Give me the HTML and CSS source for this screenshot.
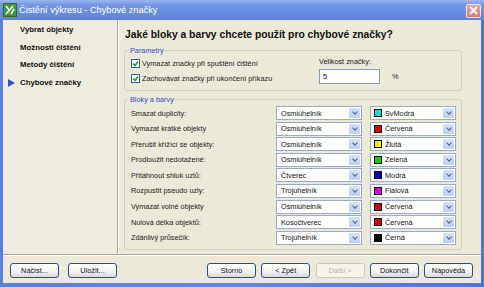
FILE: index.html
```html
<!DOCTYPE html>
<html lang="cs">
<head>
    <meta charset="UTF-8">
    <title>Čistění výkresu - Chybové značky</title>
    <link rel="stylesheet" href="styles.css">
</head>
<body>
    <div class="okno">
        <div class="titulek">
            <svg class="ikona" width="14" height="14" viewBox="0 0 14 14">
                <rect x="0.5" y="0.5" width="13" height="13" fill="#3f9a3a" stroke="#2b6e28"/>
                <path d="M3 11 L10 3 M3 3 L6 7 M8 11 L11 6" stroke="#fff" stroke-width="1.6" fill="none"/>
            </svg>
            <span class="titulek-text">Čistění výkresu - Chybové značky</span>
            <div class="zavrit">
                <svg width="9" height="9" viewBox="0 0 9 9"><path d="M1 1 L8 8 M8 1 L1 8" stroke="#fff" stroke-width="1.8"/></svg>
            </div>
        </div>

        <div class="ramec">
            <div class="obsah">
                <!-- kroky pruvodce -->
                <div class="navigace">
                    <div class="krok"><span class="znacka"></span>Vybrat objekty</div>
                    <div class="krok"><span class="znacka"></span>Možnosti čištění</div>
                    <div class="krok"><span class="znacka"></span>Metody čištění</div>
                    <div class="krok aktivni"><span class="znacka"></span>Chybové značky</div>
                </div>

                <div class="hlavni">
                    <h1>Jaké bloky a barvy chcete použít pro chybové značky?</h1>

                    <fieldset class="skupina parametry">
                        <legend>Parametry</legend>
                        <div class="zaskrtavani">
                            <div class="volba"><span class="check"></span>Vymazat značky při spuštění čištění</div>
                            <div class="volba"><span class="check"></span>Zachovávat značky při ukončení příkazu</div>
                        </div>
                        <div class="velikost">
                            <div class="velikost-popis">Velikost značky:</div>
                            <div class="velikost-radek">
                                <div class="pole">5</div>
                                <span class="procenta">%</span>
                            </div>
                        </div>
                    </fieldset>

                    <fieldset class="skupina bloky">
                        <legend>Bloky a barvy</legend>
                        <div class="mrizka">
                            <div class="popis">Smazat duplicity:</div>
                            <div class="combo"><span class="hodnota">Osmiúhelník</span><span class="sipka"></span></div>
                            <div class="combo"><span class="barva" style="background:#00e0e0"></span><span class="hodnota">SvModrá</span><span class="sipka"></span></div>

                            <div class="popis">Vymazat krátké objekty</div>
                            <div class="combo"><span class="hodnota">Osmiúhelník</span><span class="sipka"></span></div>
                            <div class="combo"><span class="barva" style="background:#e00000"></span><span class="hodnota">Červená</span><span class="sipka"></span></div>

                            <div class="popis">Přerušit křížící se objekty:</div>
                            <div class="combo"><span class="hodnota">Osmiúhelník</span><span class="sipka"></span></div>
                            <div class="combo"><span class="barva" style="background:#f0f000"></span><span class="hodnota">Žlutá</span><span class="sipka"></span></div>

                            <div class="popis">Prodloužit nedotažené:</div>
                            <div class="combo"><span class="hodnota">Osmiúhelník</span><span class="sipka"></span></div>
                            <div class="combo"><span class="barva" style="background:#00d000"></span><span class="hodnota">Zelená</span><span class="sipka"></span></div>

                            <div class="popis">Přitáhnout shluk uzlů:</div>
                            <div class="combo"><span class="hodnota">Čtverec</span><span class="sipka"></span></div>
                            <div class="combo"><span class="barva" style="background:#0000c8"></span><span class="hodnota">Modrá</span><span class="sipka"></span></div>

                            <div class="popis">Rozpustit pseudo uzly:</div>
                            <div class="combo"><span class="hodnota">Trojúhelník</span><span class="sipka"></span></div>
                            <div class="combo"><span class="barva" style="background:#e000e0"></span><span class="hodnota">Fialová</span><span class="sipka"></span></div>

                            <div class="popis">Vymazat volné objekty</div>
                            <div class="combo"><span class="hodnota">Osmiúhelník</span><span class="sipka"></span></div>
                            <div class="combo"><span class="barva" style="background:#e00000"></span><span class="hodnota">Červená</span><span class="sipka"></span></div>

                            <div class="popis">Nulová délka objektů:</div>
                            <div class="combo"><span class="hodnota">Kosočtverec</span><span class="sipka"></span></div>
                            <div class="combo"><span class="barva" style="background:#e00000"></span><span class="hodnota">Červená</span><span class="sipka"></span></div>

                            <div class="popis">Zdánlivý průsečík:</div>
                            <div class="combo"><span class="hodnota">Trojúhelník</span><span class="sipka"></span></div>
                            <div class="combo"><span class="barva" style="background:#000"></span><span class="hodnota">Černá</span><span class="sipka"></span></div>
                        </div>
                    </fieldset>
                </div>
            </div>

            <div class="paticka">
                <div class="levo">
                    <button class="tlacitko">Načíst...</button>
                    <button class="tlacitko">Uložit...</button>
                </div>
                <div class="pravo">
                    <button class="tlacitko">Storno</button>
                    <button class="tlacitko">&lt; Zpět</button>
                    <button class="tlacitko" disabled>Další &gt;</button>
                    <button class="tlacitko">Dokončit</button>
                    <button class="tlacitko">Nápověda</button>
                </div>
            </div>
        </div>
    </div>
</body>
</html>
```

FILE: styles.css
```css
body {
    margin: 0;
    font-family: "Liberation Sans", Arial, sans-serif;
    font-size: 7.3px;
    color: #222;
    background: #fff;
}

.okno {
    width: 484px;
    height: 287px;
    display: flex;
    flex-direction: column;
    background: linear-gradient(90deg, #5a7fdc, #6187df 50%, #4f74d4);
}

/* titulkovy pruh */
.titulek {
    height: 20px;
    display: flex;
    align-items: center;
    padding: 0 3px;
    background: linear-gradient(#9ab7f2, #7396e4 25%, #668ce0 70%, #5a80d9);
}

.ikona {
    flex: none;
}

.titulek-text {
    margin-left: 2px;
    color: #fff;
    font-size: 9.2px;
    flex: 1;
}

.zavrit {
    width: 15px;
    height: 14px;
    margin-top: 1px;
    box-sizing: border-box;
    border: 1px solid #f2e3e3;
    border-radius: 2px;
    background: linear-gradient(#e6a3a0, #d57a76);
    display: flex;
    align-items: center;
    justify-content: center;
}

.ramec {
    flex: 1;
    margin: 0 3px 4px 3px;
    background: #ece9d8;
    display: flex;
    flex-direction: column;
}

.obsah {
    flex: 1;
    display: flex;
}

/* leva navigace */
.navigace {
    width: 115px;
    padding: 1px 0 0 5px;
    box-sizing: border-box;
    border-right: 1px solid #aca899;
    box-shadow: 1px 0 0 #fff;
    background: #eeecdf;
}

.krok {
    height: 17.6px;
    display: flex;
    align-items: center;
    font-weight: bold;
    font-size: 7.8px;
    color: #111;
}

.znacka {
    width: 12px;
    flex: none;
}

.aktivni .znacka::before {
    content: "";
    display: block;
    width: 0;
    height: 0;
    border-top: 4px solid transparent;
    border-bottom: 4px solid transparent;
    border-left: 7px solid #2b55d6;
}

/* prava cast */
.hlavni {
    flex: 1;
    padding: 8px 19px 0 6px;
}

h1 {
    margin: 0 0 5px 1px;
    font-size: 10.3px;
    line-height: 13px;
    font-weight: bold;
    color: #111;
}

.skupina {
    margin: 0;
    border: 1px solid #d0d0bf;
    border-radius: 3px;
    padding: 1px 5px 5px 6px;
}

legend {
    color: #2a4fc8;
    padding: 0 1px;
    margin-left: -2px;
    line-height: 9px;
}

.parametry {
    display: flex;
}

.zaskrtavani {
    flex: 1;
    display: flex;
    flex-direction: column;
    gap: 1px;
}

.volba {
    height: 14px;
    display: flex;
    align-items: center;
}

.check {
    width: 9px;
    height: 9px;
    margin-right: 2px;
    box-sizing: border-box;
    border: 1px solid #2e5f96;
    background: #fff url("data:image/svg+xml,%3Csvg xmlns='http://www.w3.org/2000/svg' width='7' height='7'%3E%3Cpath d='M1 3.5 L3 5.5 L6 1.5' stroke='%2321a121' stroke-width='1.6' fill='none'/%3E%3C/svg%3E") center no-repeat;
}

.velikost {
    width: 137px;
}

.velikost-popis {
    line-height: 12px;
    margin-bottom: 1px;
}

.velikost-radek {
    display: flex;
    align-items: center;
}

.pole {
    width: 61px;
    height: 15px;
    box-sizing: border-box;
    border: 1px solid #7f9db9;
    background: #fff;
    padding-left: 3px;
    line-height: 13px;
    color: #111;
}

.procenta {
    margin-left: 12px;
}

.bloky {
    margin-top: 4px;
    padding: 2px 5px 4px 6px;
}

.mrizka {
    display: grid;
    grid-template-columns: 1fr 86px 86px;
    column-gap: 8px;
    row-gap: 1.6px;
}

.popis {
    height: 14px;
    display: flex;
    align-items: center;
}

.combo {
    height: 14px;
    box-sizing: border-box;
    border: 1px solid #97acca;
    background: #fff;
    display: flex;
    align-items: center;
    padding: 1px;
}

.hodnota {
    flex: 1;
    padding-left: 3px;
    color: #111;
}

.barva {
    width: 8px;
    height: 8px;
    margin-left: 2px;
    box-sizing: border-box;
    border: 1px solid #000;
}

.sipka {
    width: 11px;
    height: 100%;
    border-radius: 1px;
    background: linear-gradient(#d3e0fc, #bccff8);
    display: flex;
    align-items: center;
    justify-content: center;
}

.sipka::before {
    content: "";
    width: 3px;
    height: 3px;
    margin-top: -2px;
    border-right: 1.5px solid #4d6185;
    border-bottom: 1.5px solid #4d6185;
    transform: rotate(45deg);
}

/* spodni tlacitka */
.paticka {
    display: flex;
    align-items: flex-start;
    padding: 8px 0 0 7px;
    height: 29px;
    box-sizing: border-box;
    border-top: 1px solid #aca899;
    box-shadow: inset 0 1px 0 #fff;
}

.levo {
    display: flex;
    gap: 9px;
}

.pravo {
    display: flex;
    gap: 5.25px;
    margin-left: 90px;
}

.tlacitko {
    width: 49px;
    height: 15px;
    padding: 0;
    font-family: inherit;
    font-size: 7.3px;
    color: #111;
    border: 1px solid #27508c;
    border-radius: 3px;
    background: linear-gradient(#ffffff, #f3f2ec 60%, #dcd8cc);
}

.tlacitko[disabled] {
    color: #b5b2a5;
    border-color: #cbc8bb;
    background: #f5f4ea;
}
```
